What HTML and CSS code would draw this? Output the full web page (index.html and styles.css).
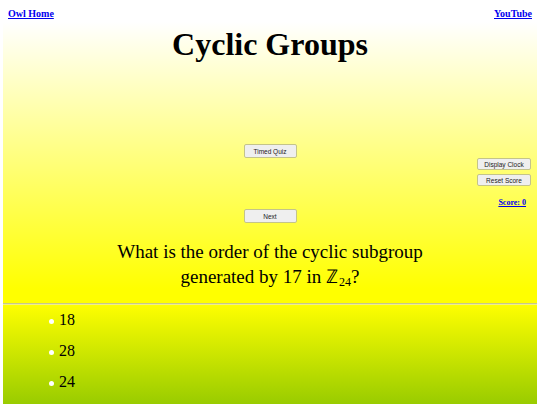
FILE: index.html
```html
<!DOCTYPE html>
<html lang="en">
<head>
  <meta charset="UTF-8">
  <meta name="viewport" content="width=device-width, initial-scale=1.0">
  <title>Cyclic Groups</title>
  <link rel="stylesheet" href="styles.css">
</head>
<body>
  <div class="top-links">
    <a href="#">Owl Home</a>
    <a href="#">YouTube</a>
  </div>

  <div class="quiz">
    <div class="quiz-top">
      <h1>Cyclic Groups</h1>
      <div class="controls">
        <div></div>
        <div class="center-buttons">
          <button class="btn">Timed Quiz</button>
          <button class="btn next">Next</button>
        </div>
        <div class="side-panel">
          <button class="btn">Display Clock</button>
          <button class="btn">Reset Score</button>
          <a href="#" class="score">Score: 0</a>
        </div>
      </div>
      <p class="question">What is the order of the cyclic subgroup generated by 17 in <span class="zset">&#8484;<sub>24</sub></span>?</p>
    </div>

    <div class="quiz-answers">
      <ul class="answers">
        <li>18</li>
        <li>28</li>
        <li>24</li>
      </ul>
    </div>
  </div>
</body>
</html>
```

FILE: styles.css
```css
body {
  margin: 0;
  padding: 0;
  font-family: "Liberation Serif", "Times New Roman", serif;
  background-color: #fff;
}
.top-links {
  display: flex;
  justify-content: space-between;
  padding: 8px 8px 0;
  height: 14px;
  font-size: 10px;
  font-weight: bold;
  line-height: 12px;
}
.top-links a {
  color: #0000ee;
}
.quiz {
  margin: 0 3px;
}
.quiz-top {
  padding-top: 4px;
  background: linear-gradient(#fff, #ff0 95%);
}
h1 {
  margin: 0;
  text-align: center;
  font-size: 32px;
  line-height: 36px;
}
.controls {
  display: grid;
  grid-template-columns: 1fr 53px 1fr;
  margin-top: 82px;
}
.center-buttons {
  display: flex;
  flex-direction: column;
  gap: 51px;
}
.btn {
  width: 53px;
  height: 14px;
  padding: 0;
  font-family: "Liberation Sans", Arial, sans-serif;
  font-size: 6.5px;
  color: #222;
  background-color: #efefef;
  border: 1px solid #c4c48a;
  border-radius: 2px;
}
.side-panel {
  justify-self: end;
  display: flex;
  flex-direction: column;
  align-items: flex-end;
  gap: 4px;
  margin-top: 14px;
  padding-right: 6px;
}
.side-panel .btn {
  width: 54px;
  height: 12px;
}
.score {
  margin-top: 8px;
  margin-right: 5px;
  font-size: 8px;
  font-weight: bold;
  color: #0000ee;
}
.question {
  max-width: 340px;
  margin: 16px auto 0;
  padding-bottom: 14px;
  text-align: center;
  font-size: 19px;
  line-height: 25px;
}
.zset {
  white-space: nowrap;
}
.question sub {
  display: inline-block;
  margin-left: 1px;
  font-size: 12px;
  line-height: 12px;
  vertical-align: -3px;
}
.quiz-answers {
  height: 100px;
  border-top: 1px solid #c6c68c;
  box-shadow: inset 0 1px #efef8a;
  background: linear-gradient(#ff0, #99cc00);
}
.answers {
  list-style: none;
  margin: 0;
  padding: 0 0 0 46px;
}
.answers li {
  display: flex;
  align-items: center;
  font-size: 16px;
  line-height: 31px;
}
.answers li::before {
  content: "";
  width: 5px;
  height: 5px;
  margin: 3px 5px 0 0;
  background-color: #fff;
  border-radius: 50%;
}
```
